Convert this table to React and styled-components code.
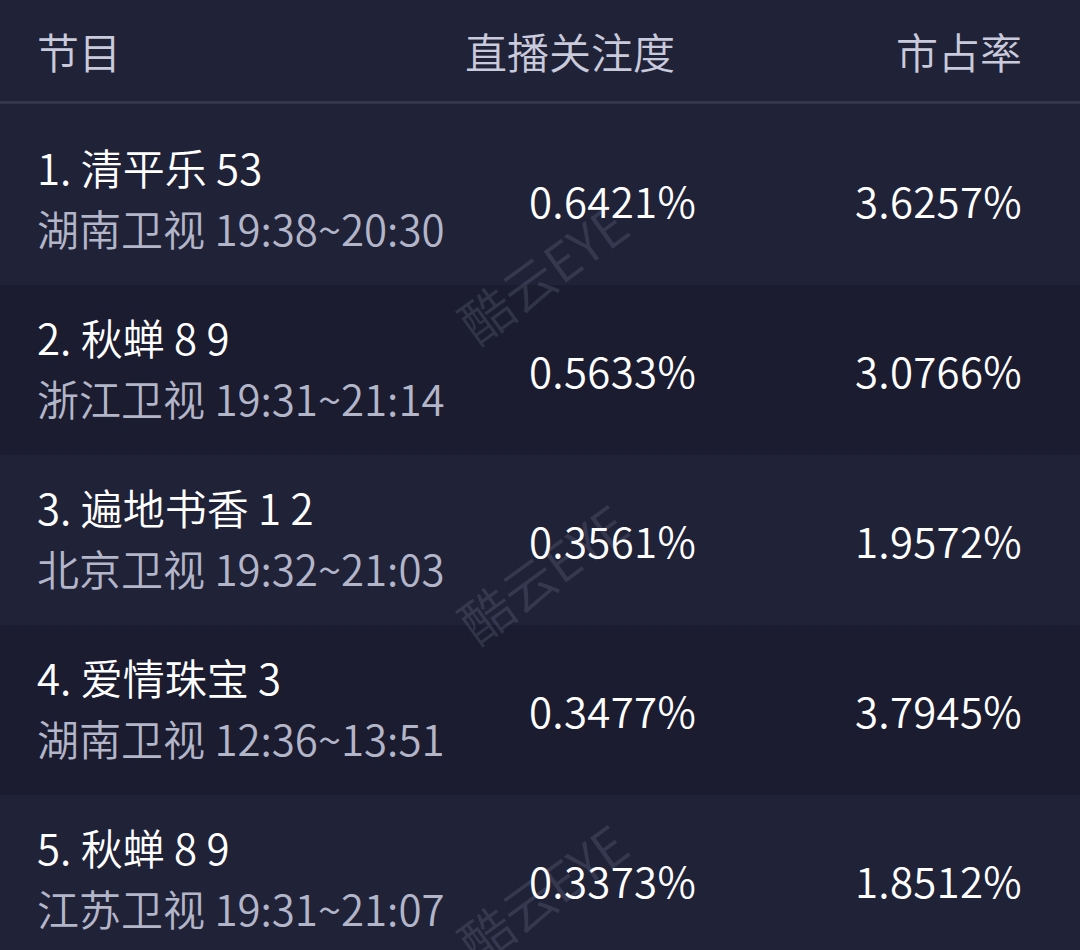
import React from "react";
import styled, { createGlobalStyle } from "styled-components";

const rows = [
  { rank: 1, name: "清平乐 53", channel: "湖南卫视", time: "19:38~20:30", attention: "0.6421%", share: "3.6257%" },
  { rank: 2, name: "秋蝉 8 9", channel: "浙江卫视", time: "19:31~21:14", attention: "0.5633%", share: "3.0766%" },
  { rank: 3, name: "遍地书香 1 2", channel: "北京卫视", time: "19:32~21:03", attention: "0.3561%", share: "1.9572%" },
  { rank: 4, name: "爱情珠宝 3", channel: "湖南卫视", time: "12:36~13:51", attention: "0.3477%", share: "3.7945%" },
  { rank: 5, name: "秋蝉 8 9", channel: "江苏卫视", time: "19:31~21:07", attention: "0.3373%", share: "1.8512%" },
];

const marks = [272, 572, 892];

const GlobalStyle = createGlobalStyle`
  html, body {
    margin: 0;
    padding: 0;
    background: #202238;
  }
  body {
    font-family: "Noto Sans CJK SC", "Noto Sans", sans-serif;
    font-weight: 350;
    -webkit-font-smoothing: antialiased;
  }
`;

const Page = styled.div`
  position: relative;
  width: 1080px;
  height: 950px;
  overflow: hidden;
  background: #202238;
`;

const Header = styled.div`
  display: grid;
  grid-template-columns: 428px auto 1fr;
  align-items: center;
  height: 101px;
  padding: 0 58px 0 37px;
  border-bottom: 3px solid #33364d;
  color: #c9cadb;
  font-size: 42px;
  line-height: 1;
`;

const HeadCell = styled.div`
  text-align: ${(p) => (p.$right ? "right" : "left")};
`;

const List = styled.div`
  padding-top: 11px;
`;

const Row = styled.div`
  display: grid;
  grid-template-columns: 492px auto 1fr;
  align-items: center;
  height: 170px;
  padding: 0 58px 0 37px;
  background: ${(p) => (p.$dark ? "#1b1c2f" : "#202238")};
`;

const Info = styled.div`
  display: flex;
  flex-direction: column;
  margin-top: -6px;
`;

const Title = styled.div`
  color: #ffffff;
  font-size: 42px;
  line-height: 61px;
`;

const Sub = styled.div`
  color: #b3b5c8;
  font-size: 42px;
  line-height: 61px;
  white-space: nowrap;
`;

const Value = styled.div`
  color: #ffffff;
  font-size: 42px;
  line-height: 1;
  letter-spacing: 0.3px;
  text-align: ${(p) => (p.$right ? "right" : "left")};
`;

const Watermark = styled.div`
  position: absolute;
  left: 542px;
  transform: translate(-50%, -50%) rotate(-36deg);
  color: rgba(200, 205, 235, 0.13);
  font-size: 52px;
  white-space: nowrap;
  pointer-events: none;
`;

export default function App() {
  return (
    <>
      <GlobalStyle />
      <Page>
        <Header>
          <HeadCell>节目</HeadCell>
          <HeadCell>直播关注度</HeadCell>
          <HeadCell $right>市占率</HeadCell>
        </Header>
        <List>
          {rows.map((r, i) => (
            <Row key={r.rank} $dark={i % 2 === 1}>
              <Info>
                <Title>
                  {r.rank}. {r.name}
                </Title>
                <Sub>
                  {r.channel} {r.time}
                </Sub>
              </Info>
              <Value>{r.attention}</Value>
              <Value $right>{r.share}</Value>
            </Row>
          ))}
        </List>
        {marks.map((y) => (
          <Watermark key={y} style={{ top: y }}>
            酷云EYE
          </Watermark>
        ))}
      </Page>
    </>
  );
}
